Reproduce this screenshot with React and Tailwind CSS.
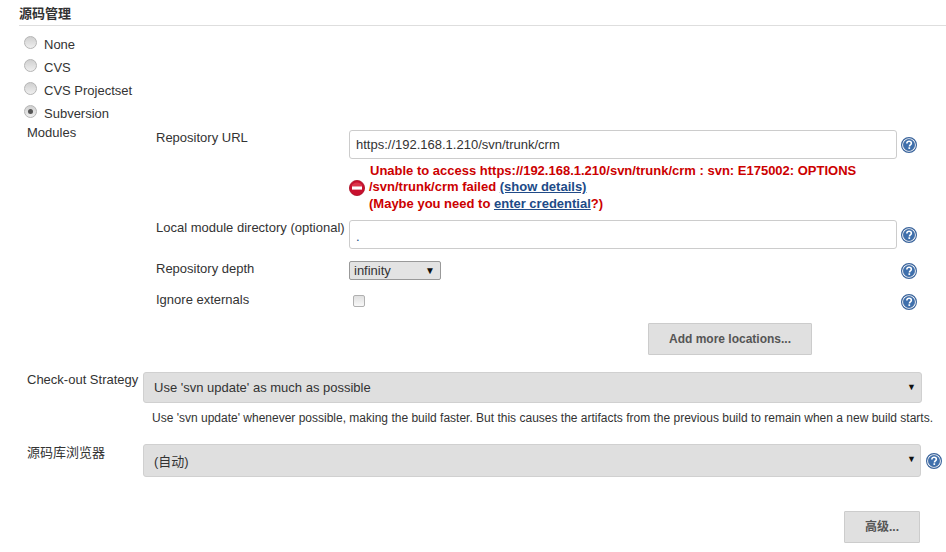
import React from 'react';

function HelpIcon() {
  return (
    <svg width="16" height="16" viewBox="0 0 17 17" className="block">
      <circle cx="8.5" cy="8.5" r="7.9" fill="#fff" stroke="#3a649c" strokeWidth="1.2" />
      <circle cx="8.5" cy="8.5" r="6" fill="#3f70ad" stroke="#2f5a94" strokeWidth="0.6" />
      <path d="M6.2 6.8c0-1.4 1-2.3 2.4-2.3s2.4.8 2.4 2.1c0 1.8-2 1.9-2 3.4" fill="none" stroke="#fff" strokeWidth="1.7" />
      <rect x="7.9" y="10.9" width="1.8" height="1.8" fill="#fff" />
    </svg>
  );
}

function ErrorIcon() {
  return (
    <svg width="16" height="16" viewBox="0 0 16 16" className="block shrink-0">
      <circle cx="8" cy="8" r="7.6" fill="#c8102e" stroke="#a80c22" strokeWidth="0.8" />
      <path d="M2.5 6a6 6 0 0 1 11 0z" fill="#e8505f" opacity="0.6" />
      <rect x="3" y="6.4" width="10" height="3.2" fill="#fff" />
    </svg>
  );
}

function Radio({ checked, label }) {
  return (
    <div className="flex h-[23px] items-center">
      <span className="ml-[24px] -mt-[5px] flex h-[13px] w-[13px] items-center justify-center rounded-full border border-[#b5b5b5] bg-gradient-to-b from-[#d0d0d0] to-[#efefef]">
        {checked && <span className="h-[5px] w-[5px] rounded-full bg-[#555]" />}
      </span>
      <span className="ml-[6px] pl-[1px]">{label}</span>
    </div>
  );
}

export default function App() {
  return (
    <div className="h-[552px] w-[946px] overflow-hidden bg-white text-[13px] leading-[15px] text-[#333] font-['Liberation_Sans','Noto_Sans_CJK_SC',sans-serif]">
      {/* section header */}
      <div className="ml-[19px] flex h-[26px] items-end border-b border-[#dedede] pb-[4px]">
        <span className="text-[13px] font-bold leading-[15px]">源码管理</span>
      </div>

      <div className="mt-[7px]">
        <Radio label="None" />
        <Radio label="CVS" />
        <Radio label="CVS Projectset" />
        <Radio checked label="Subversion" />
      </div>

      {/* modules */}
      <div className="ml-[27px] h-[15px]">Modules</div>

      <div className="-mt-[10px] ml-[156px] flex h-[29px]">
        <div className="w-[193px]">Repository URL</div>
        <div className="flex h-[29px] w-[548px] items-center rounded-[3px] border border-[#ccc] px-[6px]">https://192.168.1.210/svn/trunk/crm</div>
        <div className="ml-[4px] mt-[7px]"><HelpIcon /></div>
      </div>

      <div className="ml-[349px] mt-[4px] flex h-[49px] w-[540px] items-center text-[13px] font-bold leading-[16.5px] text-[#cc0000]">
        <ErrorIcon />
        <div className="ml-[4px]">
          <div className="pl-[1px]">Unable to access https://192.168.1.210/svn/trunk/crm : svn: E175002: OPTIONS</div>
          <div>/svn/trunk/crm failed <a className="text-[#204a87] underline">(show details)</a></div>
          <div>(Maybe you need to <a className="text-[#204a87] underline">enter credential</a>?)</div>
        </div>
      </div>

      <div className="ml-[156px] mt-[8px] flex h-[29px]">
        <div className="w-[193px] whitespace-nowrap">Local module directory (optional)</div>
        <div className="h-[29px] w-[548px] rounded-[3px] border border-[#ccc] px-[6px] pt-[8px] text-[#204a87]">.</div>
        <div className="ml-[4px] mt-[7px]"><HelpIcon /></div>
      </div>

      <div className="ml-[156px] mt-[12px] flex h-[19px]">
        <div className="w-[193px]">Repository depth</div>
        <div className="flex h-[19px] w-[92px] items-center justify-between rounded-[2px] border border-[#999] bg-[#e3e3e3] pl-[4px] pr-[5px]">
          <span>infinity</span>
          <span className="text-[10px] leading-none text-[#111]">▼</span>
        </div>
        <div className="ml-[460px] mt-[2px]"><HelpIcon /></div>
      </div>

      <div className="ml-[156px] mt-[12px] flex h-[19px]">
        <div className="w-[197px]">Ignore externals</div>
        <span className="mt-[3px] h-[12px] w-[12px] rounded-[2px] border border-[#b0b0b0] bg-gradient-to-b from-[#e0e0e0] to-[#f8f8f8]" />
        <div className="ml-[536px] mt-[2px]"><HelpIcon /></div>
      </div>

      <div className="ml-[648px] mt-[12px] flex h-[32px] w-[164px] items-center justify-center rounded-[1px] border border-[#ccc] bg-[#e0e0e0] text-[12px] font-bold text-[#555]">Add more locations...</div>

      {/* check-out strategy */}
      <div className="ml-[27px] mt-[17px] flex h-[31px]">
        <div className="w-[116px] whitespace-nowrap">Check-out Strategy</div>
        <div className="flex h-[31px] w-[779px] items-center justify-between rounded-[3px] border border-[#d0d0d0] bg-[#dfdfdf] pl-[10px] pr-[5px]">
          <span>Use 'svn update' as much as possible</span>
          <span className="-mt-[1px] text-[9px] leading-none text-[#111]">▼</span>
        </div>
      </div>
      <div className="ml-[152px] mt-[8px] whitespace-nowrap text-[12px] leading-[15px]">Use 'svn update' whenever possible, making the build faster. But this causes the artifacts from the previous build to remain when a new build starts.</div>

      <div className="ml-[27px] mt-[18px] flex h-[33px]">
        <div className="w-[116px] pt-[1px]">源码库浏览器</div>
        <div className="flex h-[33px] w-[778px] items-center justify-between rounded-[3px] border border-[#d0d0d0] bg-[#dfdfdf] pl-[10px] pr-[4px]">
          <span className="pt-[1px]">(自动)</span>
          <span className="-mt-[3px] text-[9px] leading-none text-[#111]">▼</span>
        </div>
        <div className="ml-[5px] mt-[9px]"><HelpIcon /></div>
      </div>

      <div className="ml-[844px] mt-[34px] flex h-[32px] w-[76px] items-center justify-center rounded-[1px] border border-[#ccc] bg-[#e0e0e0] text-[12px] font-bold text-[#555]">高级...</div>
    </div>
  );
}
